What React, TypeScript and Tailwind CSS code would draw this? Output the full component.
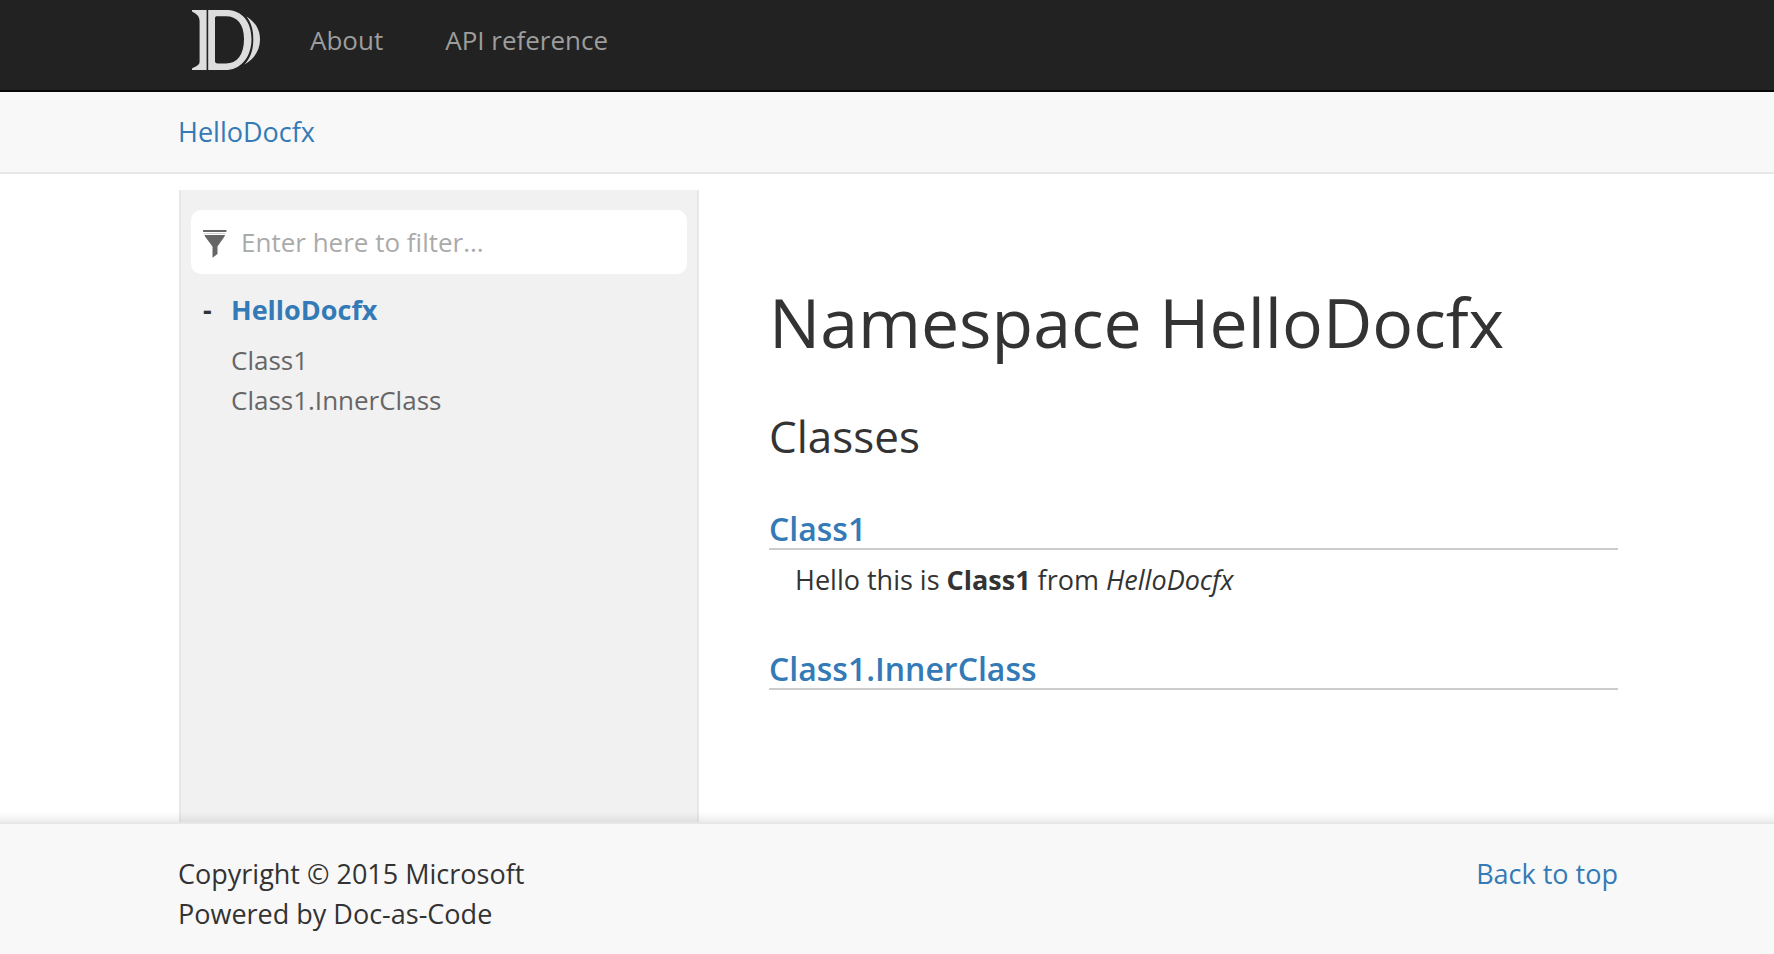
import React from "react";

function Container({ className = "", children }: { className?: string; children: React.ReactNode }) {
  return (
    <div className="pl-[22px]">
      <div className={`mx-auto w-full max-w-[1440px] ${className}`}>{children}</div>
    </div>
  );
}

function Logo() {
  return (
    <svg viewBox="0 0 68 60" className="h-[60px] w-[68px]" fill="#dddddd" aria-hidden="true">
      <path d="M0 0H14.6V60H0V58.4C5 55.500 7.6 55.500 7.6 51V12C7.6 6 5 4.500 0 1.600Z" />
      <path
        fillRule="evenodd"
        d="M16.200 0H36C50 .6 59.500 12 59.500 29C59.500 46 50 58.500 36 60H16.200ZM23 9V50.500C23 52.800 23.500 53.500 26 53.500H34C45 53.500 52 45 52 29C52 14 45 6.300 34 6.300H26C23.500 6.300 23 6.500 23 9Z"
      />
      <path d="M54.500 6.500C63 12 68 19 68 29.500C68 40 62 49.500 52.500 54.500C58.500 48 61.300 40 61.300 29.500C61.300 20 59.500 13 54.500 6.500Z" />
    </svg>
  );
}

function FilterIcon() {
  return (
    <svg viewBox="0 0 24 32" className="h-8 w-6 shrink-0" fill="#666666" aria-hidden="true">
      <path d="M0 4H23.500V5.500L23 6H.5L0 5.500Z" />
      <path d="M1 7H22.500V7.600H1Z" opacity=".5" />
      <path d="M1.500 9H22L21.500 10.500L14.500 20.500V28L9.500 31.700V20.500L2 10.500Z" />
    </svg>
  );
}

const link = "text-[#337ab7] hover:underline";

export default function App() {
  return (
    <div
      id="top"
      className="flex min-h-screen flex-col bg-white font-['Open_Sans','Noto_Sans',sans-serif] text-[27px] leading-[40px] text-[#333333]"
    >
      <header>
        <nav className="border-b-2 border-[#080808] bg-[#222222] text-[26px] text-[#9d9d9d]">
          <Container className="flex h-[90px] items-start pt-[10px]">
            <a href="#top" aria-label="Home" className="ml-[14px]">
              <Logo />
            </a>
            <a href="#about" className="mt-[10px] ml-[50px] hover:text-white">About</a>
            <a href="#api" className="mt-[10px] ml-[62px] hover:text-white">API reference</a>
          </Container>
        </nav>
        <div className="border-b-2 border-[#e7e7e7] bg-[#f8f8f8]">
          <Container className="py-5">
            <a href="#hellodocfx" className={link}>HelloDocfx</a>
          </Container>
        </div>
      </header>

      <div className="flex grow flex-col pl-[22px] pt-4">
        <div className="mx-auto flex w-full max-w-[1440px] grow">
          <aside className="ml-px w-[520px] shrink-0 border-x-2 border-[#e7e7e7] bg-[#f1f1f1] px-[10px] pt-5">
            <label className="flex h-16 items-center rounded-[10px] bg-white pl-3">
              <FilterIcon />
              <input
                type="text"
                aria-label="Filter"
                placeholder="Enter here to filter..."
                className="ml-[14px] w-full bg-transparent text-[26px] outline-none placeholder:text-[#aaaaaa]"
              />
            </label>
            <div className="mt-4 flex font-bold">
              <button type="button" aria-label="Collapse" className="w-10 pl-3 text-left">-</button>
              <a href="#hellodocfx" className={link}>HelloDocfx</a>
            </div>
            <ul className="mt-[10px] pl-10 text-[26px] text-[#666666]">
              <li><a href="#class1" className="hover:underline">Class1</a></li>
              <li><a href="#innerclass" className="hover:underline">Class1.InnerClass</a></li>
            </ul>
          </aside>
          <main className="ml-[70px] grow">
            <h1 className="mt-[92px] text-[68px] leading-[80px]">Namespace HelloDocfx</h1>
            <h2 className="mt-[44px] text-[44px] leading-[60px]">Classes</h2>
            <h3 id="class1" className="mt-[44px] border-b-2 border-[#cccccc] text-[32px] leading-[38px] font-semibold">
              <a href="#class1" className={link}>Class1</a>
            </h3>
            <p className="mt-[10px] pl-[26px]">
              Hello this is <strong>Class1</strong> from <em>HelloDocfx</em>
            </p>
            <h3 id="innerclass" className="mt-[50px] border-b-2 border-[#cccccc] text-[32px] leading-[38px] font-semibold">
              <a href="#innerclass" className={link}>Class1.InnerClass</a>
            </h3>
          </main>
        </div>
        <div className="-mt-[10px] -ml-[22px] h-[10px] bg-linear-to-t from-black/7 to-transparent" />
      </div>

      <footer className="border-t-2 border-[#e7e7e7] bg-[#f8f8f8]">
        <Container className="flex items-start justify-between pt-[30px] pb-5">
          <p>
            Copyright © 2015 Microsoft
            <br />
            Powered by Doc-as-Code
          </p>
          <a href="#top" className={link}>Back to top</a>
        </Container>
      </footer>
    </div>
  );
}
